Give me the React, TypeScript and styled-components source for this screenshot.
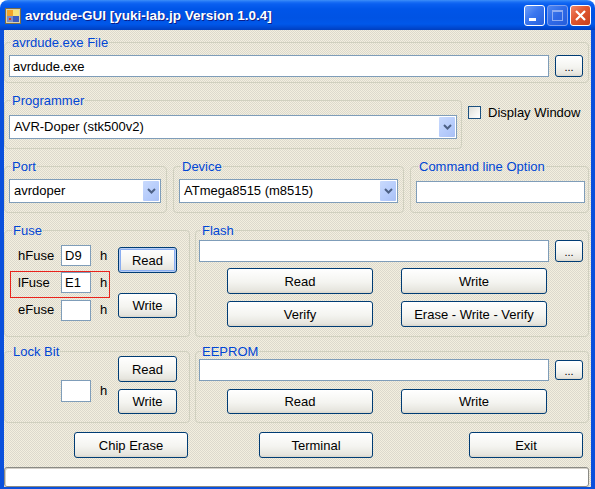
import React from "react";
import styled, { createGlobalStyle, css } from "styled-components";

const GlobalStyle = createGlobalStyle`
  html, body { margin: 0; padding: 0; background: #ffffff; }
  body { font-family: "Liberation Sans", Arial, sans-serif; font-size: 13px; color: #000; }
  * { box-sizing: border-box; }
`;

const Window = styled.div`
  width: 595px;
  height: 489px;
  display: flex;
  flex-direction: column;
`;

const TitleBar = styled.div`
  height: 30px;
  flex: none;
  display: flex;
  align-items: center;
  padding: 0 4px 0 5px;
  border-radius: 8px 8px 0 0;
  background: linear-gradient(
    to bottom,
    #3d8ef8 0px,
    #1a6ff5 2px,
    #0a5ff0 4px,
    #0055e8 9px,
    #0053e4 18px,
    #0058ea 24px,
    #004bd6 27px,
    #003fbf 30px
  );
`;

const AppIcon = styled.svg`
  flex: none;
  margin-top: 2px;
`;

const Title = styled.span`
  margin-left: 4px;
  color: #ffffff;
  font-weight: bold;
  font-size: 13.5px;
  text-shadow: 1px 1px 0 #0a1e8a;
  white-space: nowrap;
`;

const TitleButtons = styled.div`
  margin-left: auto;
  display: flex;
  gap: 2px;
  margin-top: 1px;
`;

const CaptionButton = styled.div<{ $kind: "min" | "max" | "close" }>`
  width: 21px;
  height: 21px;
  border-radius: 3px;
  border: 1px solid #ffffff;
  display: flex;
  align-items: center;
  justify-content: center;
  ${({ $kind }) =>
    $kind === "close"
      ? css`
          background: linear-gradient(135deg, #f0876a 0%, #e0562f 45%, #c8401c 100%);
        `
      : $kind === "min"
      ? css`
          background: linear-gradient(135deg, #6f9ff8 0%, #3a76ef 45%, #2660dc 100%);
        `
      : css`
          border-color: #7fa0ee;
          background: linear-gradient(135deg, #4d86f2 0%, #2f69e6 50%, #255ddc 100%);
        `}
`;

const Client = styled.div`
  flex: 1;
  display: flex;
  flex-direction: column;
  padding: 5px 2px 0 0;
  border-style: solid;
  border-color: #0a50dc;
  border-width: 0 4px 3px 4px;
  background-color: #e8e4d4;
  background-image: repeating-conic-gradient(#f3efdf 0% 25%, #dcd9cd 0% 50%);
  background-size: 2px 2px;
`;

const Row = styled.div<{ $mt: number }>`
  display: flex;
  align-items: stretch;
  margin-top: ${({ $mt }) => $mt}px;
`;

const Group = styled.fieldset<{ $w?: number; $pad: string; $ml?: number }>`
  margin: 0 0 0 ${({ $ml }) => $ml ?? 0}px;
  min-width: 0;
  border: 1px solid #d0d0bf;
  border-radius: 4px;
  padding: ${({ $pad }) => $pad};
  ${({ $w }) =>
    $w
      ? css`
          width: ${$w}px;
          flex: none;
        `
      : css`
          flex: 1;
        `}
`;

const Legend = styled.legend`
  padding: 0 1px;
  margin-left: 2px;
  color: #0046d5;
  font-size: 13px;
  line-height: 15px;
`;

const Line = styled.div<{ $gap?: number }>`
  display: flex;
  align-items: center;
  gap: ${({ $gap }) => $gap ?? 6}px;
`;

const TextBox = styled.input<{ $w?: number; $h?: number; $mt?: number }>`
  height: ${({ $h }) => $h ?? 22}px;
  margin: ${({ $mt }) => $mt ?? 0}px 0 0 0;
  border: 1px solid #7f9db9;
  background: #ffffff;
  padding: 0 3px;
  font-family: "Liberation Sans", Arial, sans-serif;
  font-size: 13px;
  color: #000;
  outline: none;
  ${({ $w }) =>
    $w
      ? css`
          width: ${$w}px;
          flex: none;
        `
      : css`
          flex: 1;
          min-width: 0;
        `}
`;

const Combo = styled.div`
  flex: 1;
  height: 24px;
  border: 1px solid #7f9db9;
  background: #ffffff;
  display: flex;
  align-items: stretch;
  padding: 1px;
`;

const ComboText = styled.span`
  flex: 1;
  padding-left: 3px;
  line-height: 20px;
  font-size: 13px;
  white-space: nowrap;
`;

const ComboArrow = styled.div`
  width: 16px;
  flex: none;
  border-radius: 1px;
  background: linear-gradient(135deg, #c9dafd 0%, #b5cbfb 60%, #a9c0f5 100%);
  display: flex;
  align-items: center;
  justify-content: center;
`;

const Btn = styled.button<{ $w: number; $h?: number; $focus?: boolean; $ml?: number }>`
  width: ${({ $w }) => $w}px;
  height: ${({ $h }) => $h ?? 26}px;
  flex: none;
  margin: 0 0 0 ${({ $ml }) => $ml ?? 0}px;
  padding: 0;
  border: 1px solid #003c74;
  border-radius: 3px;
  background: linear-gradient(to bottom, #ffffff 0%, #f4f4f0 55%, #e6e5de 90%, #d8d5cb 100%);
  font-family: "Liberation Sans", Arial, sans-serif;
  font-size: 13px;
  color: #000;
  ${({ $focus }) =>
    $focus &&
    css`
      box-shadow: inset 0 0 0 1px #b6ccf3, inset 0 0 0 2px #89adf0;
    `}
`;

const DotsBtn = styled(Btn)`
  font-size: 11px;
  line-height: 1;
  padding-top: 2px;
`;

const CheckRow = styled.label`
  display: flex;
  align-items: center;
  gap: 7px;
  margin: 12px 0 0 6px;
  align-self: flex-start;
  font-size: 13px;
  line-height: 15px;
`;

const CheckBox = styled.span`
  width: 13px;
  height: 13px;
  border: 1px solid #1c5180;
  background: linear-gradient(135deg, #dcdcd7 0%, #f4f4f1 60%, #ffffff 100%);
`;

const FuseBody = styled.div`
  display: flex;
  align-items: flex-start;
`;

const FuseRows = styled.div`
  display: flex;
  flex-direction: column;
`;

const FuseRow = styled.div<{ $mark?: boolean; $mt?: number }>`
  width: 100px;
  height: 27px;
  display: flex;
  align-items: flex-start;
  padding-left: 7px;
  margin-top: ${({ $mt }) => $mt ?? 0}px;
  border: 1px solid ${({ $mark }) => ($mark ? "#e8231b" : "transparent")};
`;

const FuseLabel = styled.span`
  width: 43px;
  line-height: 21px;
  font-size: 13px;
`;

const HexSuffix = styled.span`
  margin-left: 9px;
  line-height: 21px;
  font-size: 13px;
`;

const ButtonCol = styled.div<{ $gap: number; $mt: number }>`
  display: flex;
  flex-direction: column;
  gap: ${({ $gap }) => $gap}px;
  margin: ${({ $mt }) => $mt}px 0 0 8px;
`;

const ButtonGrid = styled.div<{ $mt: number }>`
  display: grid;
  grid-template-columns: 146px 146px;
  column-gap: 28px;
  row-gap: 7px;
  padding-left: 28px;
  margin-top: ${({ $mt }) => $mt}px;
`;

const BottomBar = styled.div`
  display: flex;
  align-items: center;
  margin-top: 9px;
  padding: 0 6px 0 70px;
`;

const StatusBar = styled.div`
  margin-top: 9px;
  height: 20px;
  border: 1px solid #8a8a84;
  border-radius: 3px;
  background: #ffffff;
  box-shadow: inset 1px 1px 0 #d4d0c8;
`;

const Chevron = () => (
  <svg width="9" height="6" viewBox="0 0 9 6">
    <path d="M1 1 L4.5 4.5 L8 1" fill="none" stroke="#4d6185" strokeWidth="2" />
  </svg>
);

function ComboBox({ text }: { text: string }) {
  return (
    <Combo>
      <ComboText>{text}</ComboText>
      <ComboArrow>
        <Chevron />
      </ComboArrow>
    </Combo>
  );
}

export default function App() {
  return (
    <>
      <GlobalStyle />
      <Window>
        <TitleBar>
          <AppIcon width="16" height="16" viewBox="0 0 16 16">
            <rect x="0.5" y="0.5" width="15" height="15" fill="#d9d2b0" stroke="#7d6d45" />
            <rect x="2" y="2" width="6" height="6" fill="#f3a227" />
            <rect x="8" y="2" width="6" height="6" fill="#f7e27a" />
            <rect x="2" y="8" width="6" height="6" fill="#7d8fc8" />
            <rect x="4" y="10" width="2" height="2" fill="#d83a20" />
            <rect x="8" y="8" width="6" height="6" fill="#3c5cc0" />
          </AppIcon>
          <Title>avrdude-GUI [yuki-lab.jp Version 1.0.4]</Title>
          <TitleButtons>
            <CaptionButton $kind="min">
              <svg width="19" height="19" viewBox="0 0 19 19">
                <rect x="4" y="12" width="7" height="3" fill="#ffffff" />
              </svg>
            </CaptionButton>
            <CaptionButton $kind="max">
              <svg width="19" height="19" viewBox="0 0 19 19">
                <rect x="4.5" y="4.5" width="10" height="10" fill="none" stroke="#8fadf2" />
                <rect x="4" y="4" width="11" height="2" fill="#8fadf2" />
              </svg>
            </CaptionButton>
            <CaptionButton $kind="close">
              <svg width="19" height="19" viewBox="0 0 19 19">
                <path d="M5 5 L14 14 M14 5 L5 14" stroke="#ffffff" strokeWidth="2.2" />
              </svg>
            </CaptionButton>
          </TitleButtons>
        </TitleBar>

        <Client>
          <Group $pad="5px 5px 5px 4px">
            <Legend>avrdude.exe File</Legend>
            <Line>
              <TextBox readOnly value="avrdude.exe" />
              <DotsBtn $w={28} $h={22}>...</DotsBtn>
            </Line>
          </Group>

          <Row $mt={10}>
            <Group $w={458} $pad="7px 4px 9px 4px">
              <Legend>Programmer</Legend>
              <Line>
                <ComboBox text="AVR-Doper (stk500v2)" />
              </Line>
            </Group>
            <CheckRow>
              <CheckBox />
              Display Window
            </CheckRow>
          </Row>

          <Row $mt={10}>
            <Group $w={163} $pad="5px 5px 9px 4px">
              <Legend>Port</Legend>
              <Line>
                <ComboBox text="avrdoper" />
              </Line>
            </Group>
            <Group $w={231} $ml={6} $pad="5px 5px 9px 5px">
              <Legend>Device</Legend>
              <Line>
                <ComboBox text="ATmega8515 (m8515)" />
              </Line>
            </Group>
            <Group $ml={6} $pad="5px 3px 9px 5px">
              <Legend>Command line Option</Legend>
              <Line>
                <TextBox readOnly value="" $mt={2} />
              </Line>
            </Group>
          </Row>

          <Row $mt={10}>
            <Group $w={186} $pad="6px 4px 8px 5px">
              <Legend>Fuse</Legend>
              <FuseBody>
                <FuseRows>
                  <FuseRow>
                    <FuseLabel>hFuse</FuseLabel>
                    <TextBox readOnly value="D9" $w={30} $h={21} />
                    <HexSuffix>h</HexSuffix>
                  </FuseRow>
                  <FuseRow $mark>
                    <FuseLabel>lFuse</FuseLabel>
                    <TextBox readOnly value="E1" $w={30} $h={21} />
                    <HexSuffix>h</HexSuffix>
                  </FuseRow>
                  <FuseRow>
                    <FuseLabel>eFuse</FuseLabel>
                    <TextBox readOnly value="" $w={30} $h={21} $mt={1} />
                    <HexSuffix>h</HexSuffix>
                  </FuseRow>
                </FuseRows>
                <ButtonCol $gap={20} $mt={3}>
                  <Btn $w={59} $focus>Read</Btn>
                  <Btn $w={59} $h={25}>Write</Btn>
                </ButtonCol>
              </FuseBody>
            </Group>
            <Group $ml={5} $pad="2px 5px 9px 3px">
              <Legend>Flash</Legend>
              <Line>
                <TextBox readOnly value="" />
                <DotsBtn $w={28} $h={22}>...</DotsBtn>
              </Line>
              <ButtonGrid $mt={6}>
                <Btn $w={146}>Read</Btn>
                <Btn $w={146}>Write</Btn>
                <Btn $w={146}>Verify</Btn>
                <Btn $w={146}>Erase - Write - Verify</Btn>
              </ButtonGrid>
            </Group>
          </Row>

          <Row $mt={7}>
            <Group $w={186} $pad="0 4px 8px 5px">
              <Legend>Lock Bit</Legend>
              <FuseBody>
                <FuseRow $mt={20}>
                  <FuseLabel />
                  <TextBox readOnly value="" $w={30} $h={22} />
                  <HexSuffix>h</HexSuffix>
                </FuseRow>
                <ButtonCol $gap={7} $mt={-3}>
                  <Btn $w={59}>Read</Btn>
                  <Btn $w={59} $h={25}>Write</Btn>
                </ButtonCol>
              </FuseBody>
            </Group>
            <Group $ml={5} $pad="0 5px 8px 3px">
              <Legend>EEPROM</Legend>
              <Line>
                <TextBox readOnly value="" />
                <DotsBtn $w={28} $h={20}>...</DotsBtn>
              </Line>
              <ButtonGrid $mt={8}>
                <Btn $w={146} $h={25}>Read</Btn>
                <Btn $w={146} $h={25}>Write</Btn>
              </ButtonGrid>
            </Group>
          </Row>

          <BottomBar>
            <Btn $w={114}>Chip Erase</Btn>
            <Btn $w={114} $ml={71}>Terminal</Btn>
            <Btn $w={114} $ml={96}>Exit</Btn>
          </BottomBar>

          <StatusBar />
        </Client>
      </Window>
    </>
  );
}
